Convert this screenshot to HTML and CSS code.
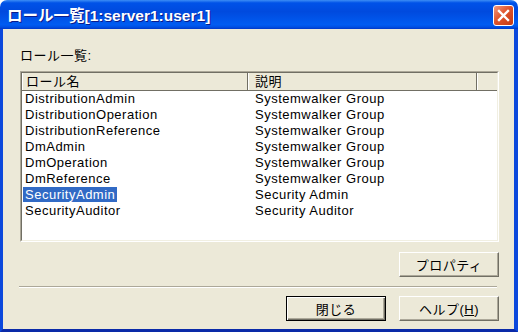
FILE: index.html
```html
<!DOCTYPE html>
<html lang="ja">
<head>
    <meta charset="UTF-8">
    <title>ロール一覧</title>
    <link rel="stylesheet" href="styles.css">
</head>
<body>
    <div class="window">
        <div class="titlebar">
            <span class="title">ロール一覧[1:server1:user1]</span>
            <button class="close-button">
                <svg width="19" height="19" viewBox="0 0 19 19">
                    <path d="M5 5 L14 14 M14 5 L5 14" stroke="#fff" stroke-width="2.4" stroke-linecap="square"/>
                </svg>
            </button>
        </div>
        <div class="client">
            <div class="list-label">ロール一覧:</div>
            <div class="listview">
                <div class="list-inner">
                    <div class="list-header">
                        <div class="col-head col-name">ロール名</div>
                        <div class="col-head col-desc">説明</div>
                        <div class="col-head col-fill"></div>
                    </div>
                    <div class="row"><div class="name-cell"><span class="name">DistributionAdmin</span></div><span class="desc">Systemwalker Group</span></div>
                    <div class="row"><div class="name-cell"><span class="name">DistributionOperation</span></div><span class="desc">Systemwalker Group</span></div>
                    <div class="row"><div class="name-cell"><span class="name">DistributionReference</span></div><span class="desc">Systemwalker Group</span></div>
                    <div class="row"><div class="name-cell"><span class="name">DmAdmin</span></div><span class="desc">Systemwalker Group</span></div>
                    <div class="row"><div class="name-cell"><span class="name">DmOperation</span></div><span class="desc">Systemwalker Group</span></div>
                    <div class="row"><div class="name-cell"><span class="name">DmReference</span></div><span class="desc">Systemwalker Group</span></div>
                    <div class="row"><div class="name-cell"><span class="name selected">SecurityAdmin</span></div><span class="desc">Security Admin</span></div>
                    <div class="row"><div class="name-cell"><span class="name">SecurityAuditor</span></div><span class="desc">Security Auditor</span></div>
                </div>
            </div>
            <div class="prop-row">
                <button class="btn">プロパティ</button>
            </div>
            <div class="separator"></div>
            <div class="button-row">
                <button class="btn default">閉じる</button>
                <button class="btn">ヘルプ(<u>H</u>)</button>
            </div>
        </div>
    </div>
</body>
</html>
```

FILE: styles.css
```css
body {
    margin: 0;
    background-color: #fff;
    font-family: "Liberation Sans", "Noto Sans CJK JP", sans-serif;
    font-size: 13px;
    letter-spacing: 0.5px;
    color: #000;
}

.window {
    width: 518px;
    height: 332px;
    display: flex;
    flex-direction: column;
}

/* Title bar */
.titlebar {
    height: 29px;
    box-sizing: border-box;
    flex-shrink: 0;
    display: flex;
    justify-content: space-between;
    align-items: center;
    padding: 5px 4px 3px 7px;
    border-radius: 7px 7px 0 0;
    background: linear-gradient(to bottom, #3d8ef5 0, #0052e8 10%, #004ade 40%, #005cf2 85%, #0050e4 93%, #0038c8 100%);
}

.title {
    color: #fff;
    font-weight: bold;
    font-size: 15.5px;
    letter-spacing: 0;
    line-height: 20px;
    text-shadow: 1px 1px #0a1c8c;
}

.close-button {
    width: 21px;
    height: 21px;
    padding: 0;
    border: 1px solid #fff;
    border-radius: 3px;
    background: linear-gradient(135deg, #f39a80 0, #e0552d 45%, #c63a12 100%);
    display: flex;
    align-items: center;
    justify-content: center;
}

/* Client area */
.client {
    flex: 1;
    background-color: #ece9d8;
    border-left: 3px solid #0b48dc;
    border-right: 4px solid #0b48dc;
    border-bottom: 3px solid #0a2aa8;
    padding: 19px 15px 0 17px;
}

.list-label {
    line-height: 16px;
    height: 16px;
    margin-bottom: 7px;
}

.listview {
    height: 171px;
    box-sizing: border-box;
    border: 1px solid;
    border-color: #aca899 #fff #fff #aca899;
}

.list-inner {
    height: 100%;
    box-sizing: border-box;
    border: 1px solid;
    border-color: #716f64 #f1efe2 #f1efe2 #716f64;
    background-color: #fff;
}

.list-header {
    display: flex;
    height: 18px;
    box-sizing: border-box;
    border-bottom: 1px solid #716f64;
    background-color: #ece9d8;
}

.col-head {
    box-sizing: border-box;
    border-left: 1px solid #fff;
    border-right: 1px solid #716f64;
    line-height: 17px;
    padding-left: 3px;
}

.col-name {
    width: 226px;
}

.col-desc {
    width: 229px;
    padding-left: 6px;
}

.col-fill {
    flex: 1;
    border-right: none;
}

.row {
    display: flex;
    height: 16px;
    line-height: 16px;
    white-space: nowrap;
}

.name-cell {
    width: 230px;
    margin-left: 1px;
}

.name {
    padding: 0 2px;
}

.name.selected {
    background-color: #316ac5;
    color: #fff;
}

.desc {
    padding: 0 2px;
}

/* Buttons */
.prop-row,
.button-row {
    display: flex;
    justify-content: flex-end;
    gap: 13px;
}

.prop-row {
    margin-top: 10px;
}

.separator {
    margin: 9px 2px 0 -1px;
    height: 1px;
    background-color: #aca899;
    border-bottom: 1px solid #fff;
}

.button-row {
    margin-top: 8px;
}

.btn {
    width: 100px;
    height: 25px;
    padding: 0;
    font-family: inherit;
    font-size: 13px;
    letter-spacing: 0.5px;
    color: #000;
    background-color: #ece9d8;
    border: 1px solid;
    border-color: #fff #716f64 #716f64 #fff;
    box-shadow: inset -1px -1px #aca899;
}

.btn.default {
    border-color: #000;
    box-shadow: inset 1px 1px #fff, inset -1px -1px #716f64, inset -2px -2px #aca899;
}
```
